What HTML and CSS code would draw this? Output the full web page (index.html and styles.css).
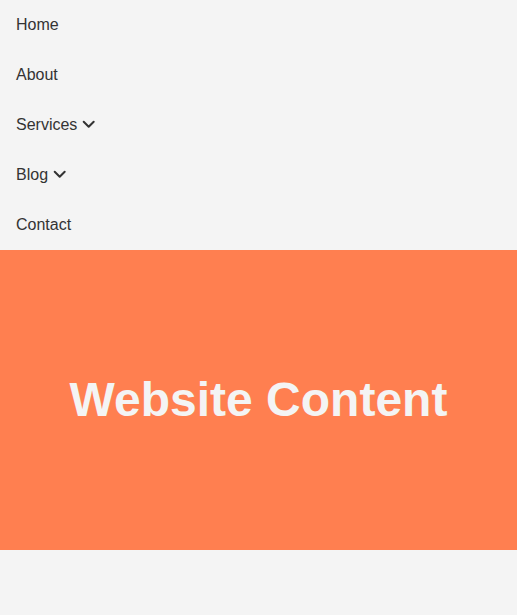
FILE: index.html
```html
<!DOCTYPE html>
<html lang="en">
<head>
<meta charset="utf-8">
<meta name="viewport" content="width=device-width, initial-scale=1">
<title>Website</title>
<link rel="stylesheet" href="styles.css">
</head>
<body>
<nav class="nav" aria-label="Main">
  <ul class="nav-list">
    <li><a class="nav-link" href="#">Home</a></li>
    <li><a class="nav-link" href="#">About</a></li>
    <li><a class="nav-link" href="#">Services
      <svg class="chevron" viewBox="0 0 14 16" aria-hidden="true"><path d="M1.7 4.8 6.7 9.8 11.7 4.8"/></svg></a></li>
    <li><a class="nav-link" href="#">Blog
      <svg class="chevron" viewBox="0 0 14 16" aria-hidden="true"><path d="M1.7 4.8 6.7 9.8 11.7 4.8"/></svg></a></li>
    <li><a class="nav-link" href="#">Contact</a></li>
  </ul>
</nav>
<main class="content">
  <h1 class="title">Website Content</h1>
</main>
</body>
</html>
```
FILE: styles.css
```css
* {
  box-sizing: border-box;
  margin: 0;
  padding: 0;
}

body {
  background: #f4f4f4;
  color: #333;
  font-family: "Liberation Sans", Arial, sans-serif;
  font-size: 16px;
}

.nav-list {
  list-style: none;
}

.nav-link {
  display: flex;
  align-items: center;
  gap: 5px;
  padding: 0 16px;
  line-height: 50px;
  color: inherit;
  text-decoration: none;
}

.chevron {
  width: 14px;
  height: 16px;
  fill: none;
  stroke: currentColor;
  stroke-width: 2;
  stroke-linecap: round;
  stroke-linejoin: round;
}

.content {
  display: flex;
  align-items: center;
  justify-content: center;
  height: 300px;
  background: coral;
}

.title {
  color: #f4f4f4;
  font-size: 48px;
  line-height: 54px;
  text-align: center;
}
```
